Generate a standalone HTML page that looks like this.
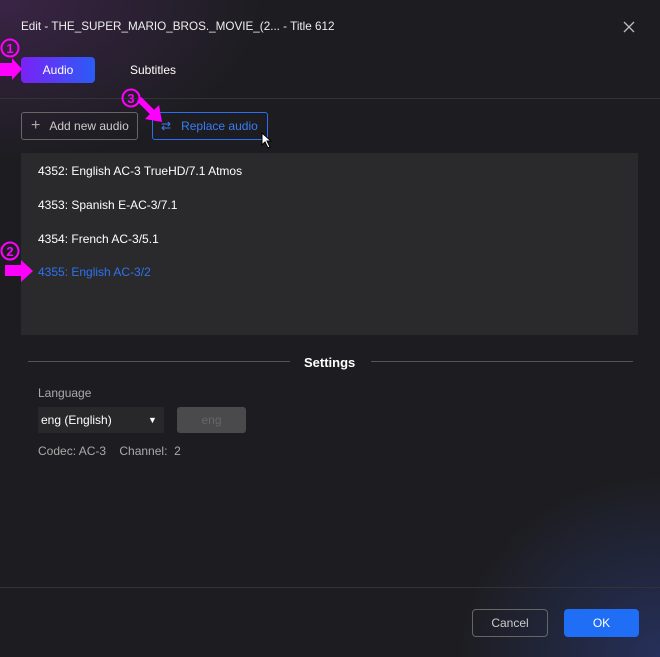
<!DOCTYPE html>
<html><head><style>
body{margin:0;width:660px;height:657px;overflow:hidden;font-family:"Liberation Sans",sans-serif;color:#fff;font-size:12px;
background:radial-gradient(ellipse 260px 160px at 0px 0px,#3a2446 0%,rgba(30,30,34,0) 100%),radial-gradient(ellipse 200px 180px at 660px 657px,#26305a 0%,rgba(30,30,34,0) 100%),#1d1d21;position:relative}
.a{position:absolute}
</style></head><body>
<div class="a" style="left:21px;top:20px;font-size:11.7px;color:#eee">Edit - THE_SUPER_MARIO_BROS._MOVIE_(2... - Title 612</div>
<svg class="a" style="left:623px;top:21px" width="12" height="12"><path d="M1 1L11 11M11 1L1 11" stroke="#bbb" stroke-width="1.3"/></svg>
<div class="a" style="left:21px;top:57px;width:74px;height:26px;border-radius:4px;background:linear-gradient(90deg,#7a22f5,#2b5cf5);text-align:center;line-height:26px">Audio</div>
<div class="a" style="left:130px;top:63px">Subtitles</div>
<div class="a" style="left:0;top:98px;width:660px;height:1px;background:#333"></div>
<div class="a" style="left:21px;top:112px;width:115px;height:26px;border:1px solid #666;border-radius:3px;color:#ccc;line-height:26px"><span style="margin-left:9px;font-size:16px;color:#aaa">+</span><span style="margin-left:9px">Add new audio</span></div>
<div class="a" style="left:152px;top:112px;width:114px;height:26px;border:1px solid #2a6ef5;border-radius:3px;color:#3b7cf5;line-height:26px"><span style="margin-left:8px">⇄</span><span style="margin-left:10px">Replace audio</span></div>
<div class="a" style="left:21px;top:153px;width:617px;height:182px;background:#2a2a2d"></div>
<div class="a" style="left:38px;top:164px">4352: English AC-3 TrueHD/7.1 Atmos</div>
<div class="a" style="left:38px;top:198px">4353: Spanish E-AC-3/7.1</div>
<div class="a" style="left:38px;top:232px">4354: French AC-3/5.1</div>
<div class="a" style="left:38px;top:265px;color:#2f72f0">4355: English AC-3/2</div>
<div class="a" style="left:28px;top:361px;width:262px;height:1px;background:#555"></div>
<div class="a" style="left:371px;top:361px;width:262px;height:1px;background:#555"></div>
<div class="a" style="left:304px;top:355px;font-weight:bold;font-size:13px">Settings</div>
<div class="a" style="left:38px;top:386px;color:#aaa">Language</div>
<div class="a" style="left:38px;top:407px;width:126px;height:26px;background:#28282b;line-height:26px"><span style="margin-left:3px">eng (English)</span><span style="position:absolute;left:110px;top:0;font-size:9px">▼</span></div>
<div class="a" style="left:177px;top:407px;width:69px;height:26px;background:#4a4a4d;border-radius:3px;color:#666;text-align:center;line-height:26px">eng</div>
<div class="a" style="left:38px;top:444px;color:#aaa">Codec: AC-3&nbsp;&nbsp;&nbsp; Channel:&nbsp; 2</div>
<div class="a" style="left:0;top:587px;width:660px;height:1px;background:#333"></div>
<div class="a" style="left:472px;top:609px;width:74px;height:26px;border:1px solid #666;border-radius:4px;color:#ccc;text-align:center;line-height:26px">Cancel</div>
<div class="a" style="left:564px;top:609px;width:75px;height:28px;background:#1f6ef5;border-radius:4px;text-align:center;line-height:28px">OK</div>
<!-- annotations -->
<svg class="a" style="left:0;top:37px" width="22" height="22"><circle cx="10" cy="11" r="8.5" fill="none" stroke="#f0f" stroke-width="2"/><text x="10" y="16" text-anchor="middle" fill="#f0f" font-size="13" font-weight="bold" font-family="Liberation Sans">1</text></svg>
<div class="a" style="left:0;top:63px;width:12px;height:13px;background:#f0f"></div>
<div class="a" style="left:12px;top:58px;border-left:10px solid #f0f;border-top:11px solid transparent;border-bottom:11px solid transparent"></div>
<svg class="a" style="left:0;top:240px" width="22" height="22"><circle cx="10" cy="11" r="8.5" fill="none" stroke="#f0f" stroke-width="2"/><text x="10" y="16" text-anchor="middle" fill="#f0f" font-size="13" font-weight="bold" font-family="Liberation Sans">2</text></svg>
<div class="a" style="left:5px;top:265px;width:16px;height:11px;background:#f0f"></div>
<div class="a" style="left:21px;top:260px;border-left:12px solid #f0f;border-top:11px solid transparent;border-bottom:11px solid transparent"></div>
<svg class="a" style="left:121px;top:87px" width="22" height="22"><circle cx="10" cy="11" r="8.5" fill="none" stroke="#f0f" stroke-width="2"/><text x="10" y="16" text-anchor="middle" fill="#f0f" font-size="13" font-weight="bold" font-family="Liberation Sans">3</text></svg>
<svg class="a" style="left:135px;top:95px" width="30" height="30"><line x1="4" y1="4" x2="18" y2="18" stroke="#f0f" stroke-width="6"/><polygon points="27,27 10,24 24,10" fill="#f0f"/></svg>
<svg class="a" style="left:261px;top:132px" width="12" height="17"><polygon points="1,1 1,13 4,10 7,16 9,15 6,9 10,9" fill="#fff" stroke="#000" stroke-width="1"/></svg>
</body></html>
